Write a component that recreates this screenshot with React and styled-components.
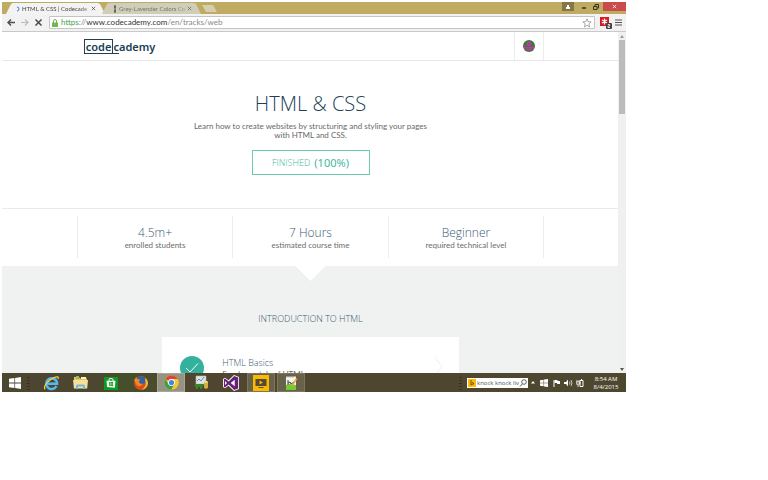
import React from "react";
import styled, { createGlobalStyle } from "styled-components";

const Global = createGlobalStyle`
  *, *::before, *::after { box-sizing: border-box; }
  body { margin: 0; background: #fff; font-family: "Open Sans", "Noto Sans", sans-serif; }
  h1, h2, h3, p { margin: 0; font-weight: 400; }
  button { border: 0; padding: 0; margin: 0; background: none; font: inherit; color: inherit; }
  svg { display: block; flex: none; }
`;

const Desktop = styled.div`
  display: flex;
  flex-direction: column;
  width: 81.25vw;
  height: 81.25vh;
  margin: 2px;
  overflow: hidden;
`;

/* Browser frame */
const TitleBar = styled.header`
  display: flex;
  flex: none;
  height: 12px;
  background: #bfab62;
`;
const TabStrip = styled.div`
  display: flex;
  flex: 1;
  align-items: flex-end;
  padding-left: 4px;
`;
const Tab = styled.div`
  display: flex;
  align-items: center;
  width: 99px;
  height: 11px;
  padding: 0 9px 0 11px;
  gap: 2px;
  margin-right: -3px;
  background: ${(p) => (p.$active ? "#f3f3f3" : "#d0cdb9")};
  color: ${(p) => (p.$active ? "#444" : "#77766c")};
  clip-path: polygon(0 100%, 5px 10%, 7px 0, calc(100% - 7px) 0, calc(100% - 5px) 10%, 100% 100%);
`;
const TabTitle = styled.span`
  flex: 1;
  white-space: nowrap;
  font-family: Lato, sans-serif;
  font-size: 6px;
  line-height: 10px;
  mask-image: linear-gradient(90deg, #000 85%, #0006);
`;
const NewTab = styled.button`
  width: 15px;
  height: 7px;
  margin: 0 0 2px 4px;
  background: #d5cfb0;
  clip-path: polygon(0 0, 11px 0, 100% 100%, 4px 100%);
`;
const WindowButtons = styled.div`
  display: flex;
  align-items: flex-start;
`;
const WindowButton = styled.button`
  display: grid;
  place-items: center;
  width: ${(p) => p.$w}px;
  height: 9px;
  background: ${(p) => p.$bg || "transparent"};
`;
const Spacer = styled.span`
  width: ${(p) => p.$w}px;
`;
const ToolBar = styled.nav`
  display: flex;
  flex: none;
  align-items: center;
  height: 18px;
  padding: 0 3px;
  background: #f2f2f2;
  border-bottom: 1px solid #c9c9c9;
`;
const ToolButton = styled.button`
  display: grid;
  place-items: center;
  width: ${(p) => p.$w || 14}px;
  height: 14px;
`;
const Omnibox = styled.form`
  display: flex;
  flex: 1;
  align-items: center;
  height: 13px;
  margin-left: 2px;
  padding: 0 2px;
  gap: 3px;
  background: #fff;
  border: 1px solid #c4c4c4;
  border-radius: 1px;
`;
const Address = styled.div`
  flex: 1;
  font-family: Lato, sans-serif;
  font-size: 8px;
  line-height: 11px;
  color: #888;
  white-space: nowrap;
  b { font-weight: 400; color: #333; }
  i { font-style: normal; color: #3ba346; }
`;

/* Page */
const Viewport = styled.div`
  display: flex;
  flex: 1;
  min-height: 0;
`;
const Page = styled.main`
  flex: 1;
  min-width: 0;
  overflow: hidden;
  background: #f0f2f1;
`;
const ScrollTrack = styled.div`
  display: flex;
  flex-direction: column;
  align-items: center;
  flex: none;
  width: 8px;
  background: #f0f0f0;
`;
const ScrollThumb = styled.div`
  width: 6px;
  height: 74px;
  margin-bottom: auto;
  background: #bcbcbc;
`;
const ScrollArrow = styled.button`
  display: grid;
  place-items: center;
  width: 8px;
  height: 8px;
`;
const SiteHeader = styled.header`
  display: flex;
  justify-content: center;
  height: 29px;
  padding-left: 1px;
  background: #fff;
  border-bottom: 1px solid #e6e8e8;
`;
const HeaderInner = styled.div`
  display: flex;
  justify-content: space-between;
  width: 76%;
  padding-left: 7px;
`;
const Logo = styled.a`
  display: flex;
  align-items: center;
  align-self: center;
  color: #204056;
  font-family: "Noto Sans", sans-serif;
  font-size: 11px;
  font-weight: 600;
  line-height: 13px;
  text-decoration: none;
`;
const LogoBox = styled.span`
  height: 15px;
  padding: 0 1px;
  border: 1px solid #204056;
`;
const LogoUnder = styled.span`
  border-bottom: 1px solid #204056;
  height: 15px;
  padding-top: 1px;
`;
const LogoRest = styled.span`
  height: 15px;
  padding-top: 1px;
`;
const AvatarCell = styled.button`
  display: grid;
  place-items: center;
  width: 30px;
  border: solid #eceeee;
  border-width: 0 1px;
`;
const Hero = styled.section`
  display: flex;
  flex-direction: column;
  align-items: center;
  height: 148px;
  padding: 29px 0 0 1px;
  background: #fff;
  border-bottom: 1px solid #e9ebeb;
  text-align: center;
`;
const Title = styled.h1`
  color: #204056;
  font-size: 20px;
  font-weight: 300;
  line-height: 28px;
`;
const Lead = styled.p`
  width: 240px;
  margin-top: 4px;
  color: #686868;
  font-family: Lato, sans-serif;
  font-size: 8px;
  line-height: 9px;
`;
const Finished = styled.button`
  display: flex;
  align-items: center;
  justify-content: center;
  gap: 4px;
  width: 118px;
  height: 25px;
  margin-top: 10px;
  border: 1px solid #6cc9b4;
  color: #45b79e;
  font-size: 9px;
  font-weight: 300;
  strong { font-family: "Noto Sans", sans-serif; font-size: 11px; font-weight: 400; }
`;
const Stats = styled.section`
  display: flex;
  justify-content: center;
  height: 57px;
  padding: 7px 0 8px 1px;
  background: #fff;
`;
const StatGrid = styled.div`
  display: grid;
  grid-template-columns: repeat(3, 1fr);
  width: 76%;
  border-right: 1px solid #eceeee;
`;
const Stat = styled.div`
  padding-top: 8px;
  border-left: 1px solid #eceeee;
  text-align: center;
`;
const StatValue = styled.h2`
  color: #3d5a74;
  font-size: 12px;
  font-weight: 300;
  line-height: 17px;
`;
const StatLabel = styled.p`
  color: #6c6c6c;
  font-family: Lato, sans-serif;
  font-size: 8px;
  line-height: 9px;
`;
const Course = styled.section`
  display: flex;
  flex-direction: column;
  align-items: center;
  padding-left: 1px;
`;
const Pointer = styled.div`
  width: 30px;
  height: 15px;
  background: #fff;
  clip-path: polygon(0 0, 100% 0, 50% 100%);
`;
const CourseTitle = styled.h2`
  margin: 31px 0 11px;
  color: #3d5a74;
  font-size: 9px;
  font-weight: 300;
  line-height: 14px;
`;
const Card = styled.article`
  display: flex;
  align-items: flex-start;
  width: 48.2%;
  min-height: 64px;
  padding: 19px 16px 0 18px;
  background: #fff;
`;
const CardText = styled.div`
  flex: 1;
  margin-left: 18px;
  color: #686868;
  font-family: Lato, sans-serif;
  font-size: 8px;
  line-height: 8px;
`;
const CardTitle = styled.h3`
  color: #3d5a74;
  font-family: "Open Sans", sans-serif;
  font-size: 9px;
  font-weight: 300;
  line-height: 14px;
`;

/* Task bar */
const TaskBar = styled.footer`
  display: flex;
  align-items: center;
  flex: none;
  height: 19px;
  background: linear-gradient(90deg, #4c4530, #4d4730 15%, #44502a 21%, #504630 28%, #4e472f);
  color: #fff;
`;
const TaskItem = styled.button`
  display: grid;
  place-items: center;
  width: ${(p) => p.$w || 28}px;
  height: 19px;
  margin: 0 1px;
  background: ${(p) => (p.$active ? "#979383" : p.$open ? "#686249" : "transparent")};
  border: solid ${(p) => (p.$active ? "#aaa697" : p.$open ? "#7c765d" : "transparent")};
  border-width: 1px;
`;
const Grip = styled.span`
  width: 3px;
  height: 15px;
  background: repeating-linear-gradient(0deg, #37331f 0 1px, transparent 1px 3px);
`;
const Tray = styled.div`
  display: flex;
  align-items: center;
  margin-left: auto;
`;
const SearchBox = styled.label`
  display: flex;
  align-items: center;
  width: 61px;
  height: 10px;
  margin: 0 1px 0 5px;
  padding: 1px;
  background: #fff;
`;
const SearchInput = styled.input`
  flex: 1;
  min-width: 0;
  height: 8px;
  padding: 0 0 0 1px;
  border: 0;
  outline: 0;
  background: none;
  color: #555;
  font: 6px/8px "Open Sans", sans-serif;
`;
const TrayButton = styled.button`
  display: grid;
  place-items: center;
  width: ${(p) => p.$w || 12}px;
  height: 14px;
`;
const Clock = styled.time`
  width: 40px;
  font-size: 6px;
  line-height: 8px;
  text-align: center;
`;

const Svg = ({ w, h = w, box, children }) => (
  <svg width={w} height={h} viewBox={box || `0 0 ${w} ${h}`} fill="none" aria-hidden="true">{children}</svg>
);
const Cross = ({ size = 5, color = "#555", width = 1 }) => (
  <Svg w={size} box="0 0 6 6"><path d="M1 1l4 4M5 1L1 5" stroke={color} strokeWidth={width} /></Svg>
);
const WinLogo = ({ size }) => (
  <Svg w={size} box="0 0 12 12"><path d="M0 1.7L5.4 1v4.6H0zM6.1.9L12 0v5.6H6.1zM0 6.4h5.4V11L0 10.3zM6.1 6.4H12V12l-5.9-.9z" fill="#fff" /></Svg>
);

const apps = [
  { name: "Internet Explorer", icon: (
    <Svg w={17} h={16}>
      <path d="M13.5 11.2A5.4 5.4 0 1 1 14 7.5v1.2H5.2" stroke="#54b9ee" strokeWidth="2.5" />
      <path d="M3.5 8.7h10" stroke="#54b9ee" strokeWidth="1.8" />
      <path d="M2.2 14.2C-.8 12 6 4.3 11.6 2.3c2.8-1 4.3-.6 3.4 1.6" stroke="#f1cc4c" strokeWidth="1.3" />
    </Svg>) },
  { name: "File Explorer", icon: (
    <Svg w={16} h={15}>
      <path d="M1 2h5l1 1.5h7V13H1z" fill="#e6c46b" />
      <path d="M3 1h3v3H3z" fill="#8dbd65" /><path d="M8 2h5v2H8z" fill="#fff1b9" />
      <path d="M0 5h15l-.8 8.5H1z" fill="#f6df97" />
      <path d="M3 14v-3q0-1.5 1.5-1.5h6Q12 9.5 12 11v3h-2v-2.5H5V14z" fill="#73b9df" />
    </Svg>) },
  { name: "Store", icon: (
    <Svg w={14}>
      <path d="M0 1h14v13H0z" fill="#0c9b22" />
      <path d="M5 5V3.6q0-1 1-1h2q1 0 1 1V5" stroke="#fff" />
      <path d="M2.5 4.7h9l-.6 7-7.8-.6z" fill="#fff" />
      <path d="M5 6.3l1.700-.2v1.700H5zM7.100 6l2-.2v2h-2zM5 8.300h1.700V10L5 9.800zM7.100 8.300h2v2l-2-.2z" fill="#0c9b22" />
    </Svg>) },
  { name: "Firefox", icon: (
    <Svg w={16}>
      <circle cx="8" cy="8" r="7" fill="#db4b1e" />
      <path d="M3.5 3Q8-.5 12.5 3.2L13 8 8 9 3 6z" fill="#2b64a8" />
      <path d="M1.2 5Q2 3 3.5 2l.7 2 3 .6-1.4 1.7 1 2.2 3 .5-2.3 2Q4.3 12 3 9z" fill="#f08a20" />
      <path d="M12 3q3 2 3 5.5Q14 14 8.5 15q4-3 4.2-6z" fill="#f7b733" />
    </Svg>) },
  { name: "Chrome", active: true, icon: (
    <Svg w={15} box="0 0 16 16">
      <circle cx="8" cy="8" r="7.5" fill="#f4c930" />
      <path d="M8 8L1.5 4.250A7.5 7.5 0 0 1 14.5 4.25H8z" fill="#dc4434" />
      <path d="M1.5 4.25A7.5 7.5 0 0 0 8 15.5l3.3-5.7L8 8 4.7 9.8z" fill="#3b9e4b" />
      <path d="M8 4.25h6.5A7.5 7.5 0 0 1 8 15.5l3.3-5.7z" fill="#f4c930" />
      <circle cx="8" cy="8" r="3.7" fill="#fff" /><circle cx="8" cy="8" r="2.8" fill="#4388da" />
    </Svg>) },
  { name: "Server monitor", icon: (
    <Svg w={15}>
      <path d="M2 1h10v8H2z" fill="#dfe5e4" stroke="#aeb8b5" strokeWidth=".6" />
      <path d="M3 6l2-2 2 2 3-4" stroke="#6e8eb0" />
      <path d="M1 9h8v3H1zM2 12h2v2H2zM6 12h2v2H6z" fill="#35872d" />
      <path d="M10 7q2-1.5 4 0v6q-2 1.5-4 0z" fill="#d4b13b" /><ellipse cx="12" cy="7" rx="2" ry="1" fill="#f2dc82" />
    </Svg>) },
  { name: "Visual Studio", icon: (
    <Svg w={16}>
      <path d="M11 0l5 2v12l-5 2-5.5-5.3L2 13.3l-2-1.2V3.900l2-1.200 3.500 2.600z" fill="#fff" />
      <path fillRule="evenodd" d="M11.2 1l4 1.6v10.8l-4 1.6-5.5-5.4L2 12.4l-1.100-.6V4.200L2 3.600l3.700 2.800zM11.700 4.700L7.700 8l4 3.300zM2 6v4l2-2z" fill="#68217a" />
    </Svg>) },
  { name: "Media player", open: true, icon: (
    <Svg w={16}>
      <path d="M0 0h16v16H0z" fill="#fdb900" /><path d="M2.5 4h11v7h-11zM5.5 12h5v1h-5z" fill="#554a35" />
      <path d="M6.5 5.5L10 7.5l-3.5 2z" fill="#fdb900" />
    </Svg>) },
  { name: "Notepad++", open: true, icon: (
    <Svg w={15} h={16}>
      <path d="M2 1.5h10V15H2z" fill="#f5f7ef" /><path d="M2 10l4-1 6 1v5H2z" fill="#78c833" />
      <path d="M3 1v1.5M5 1v1.5M7 1v1.5M9 1v1.5" stroke="#777" strokeWidth=".7" />
      <path d="M4 5v5M4 8l2-1 1 2 3-2" stroke="#334431" />
      <path d="M8 11l5-8" stroke="#e2a936" strokeWidth="1.5" /><path d="M12.5 3.5l1.3-2" stroke="#bd3c2d" strokeWidth="1.8" />
    </Svg>) },
];

const stats = [
  ["4.5m+", "enrolled students"],
  ["7 Hours", "estimated course time"],
  ["Beginner", "required technical level"],
];

export default function App() {
  return (
    <>
      <Global />
      <Desktop>
        <TitleBar>
          <TabStrip>
            <Tab $active>
              <Svg w={3} h={6}><path d="M0 1q2 0 2 2T0 5" stroke="#4778df" /></Svg>
              <TabTitle>HTML &amp; CSS | Codecade</TabTitle>
              <button aria-label="Close tab"><Cross /></button>
            </Tab>
            <Tab>
              <Svg w={4} h={8}><path d="M2 0v8M1 2h2M1 6h2" stroke="#444" /></Svg>
              <TabTitle>Grey-Lavender Colors Co</TabTitle>
              <button aria-label="Close tab"><Cross color="#737064" /></button>
            </Tab>
            <NewTab aria-label="New tab" />
          </TabStrip>
          <WindowButtons>
            <WindowButton $w={12} $bg="#85774a" aria-label="User">
              <Svg w={6}><path d="M2 1h2v2h1v2H1V3h1z" fill="#fff" /></Svg>
            </WindowButton>
            <Spacer $w={4} />
            <WindowButton $w={12} aria-label="Minimize"><Svg w={4} h={5}><path d="M0 4h4" stroke="#373323" strokeWidth="1.5" /></Svg></WindowButton>
            <WindowButton $w={12} aria-label="Restore">
              <Svg w={6}><path d="M2 2V.5h3.5V4H4M.5 2.5H4v3H.5z" stroke="#373323" /></Svg>
            </WindowButton>
            <Spacer $w={1} />
            <WindowButton $w={23} $bg="#cb4a4c" aria-label="Close"><Cross color="#fff" /></WindowButton>
          </WindowButtons>
        </TitleBar>
        <ToolBar>
          <ToolButton $w={11} aria-label="Back"><Svg w={8} h={7}><path d="M8 3.5H1M4 .5l-3 3 3 3" stroke="#505050" strokeWidth="1.5" /></Svg></ToolButton>
          <Spacer $w={3} />
          <ToolButton $w={11} aria-label="Forward"><Svg w={8} h={7}><path d="M0 3.5h7M4 .5l3 3-3 3" stroke="#bbb" strokeWidth="1.2" /></Svg></ToolButton>
          <Spacer $w={3} />
          <ToolButton $w={11} aria-label="Stop"><Cross size={9} color="#484848" /></ToolButton>
          <Spacer $w={3} />
          <Omnibox>
            <Svg w={6} h={8}><path d="M1.5 4V2q0-1.500 1.500-1.500T4.500 2v2" stroke="#79a96b" /><path d="M0 3.500h6V8H0z" fill="#6dbb4e" /></Svg>
            <Address><i>https</i>://<b>www.codecademy.com</b>/en/tracks/web</Address>
            <button type="button" aria-label="Bookmark"><Svg w={10} box="0 0 12 12"><path d="M6 1l1.400 3.400 3.600.3-2.800 2.400.9 3.600L6 8.800l-3.100 1.900.9-3.600L1 4.700l3.600-.3z" stroke="#8c8c8c" strokeWidth=".9" /></Svg></button>
          </Omnibox>
          <Spacer $w={3} />
          <ToolButton $w={14} aria-label="Extension">
            <Svg w={13} h={13}>
              <path d="M1 1h9v9H1z" fill="#d71920" /><path d="M5.500 2.500v6M3 4l5 3M8 4L3 7" stroke="#fff" strokeWidth="1.300" />
              <rect x="7" y="7" width="6" height="6" rx="1" fill="#444" /><path d="M8.800 8.500h1.900V10H9v1.500h2" stroke="#fff" strokeWidth=".8" />
            </Svg>
          </ToolButton>
          <Spacer $w={2} />
          <ToolButton $w={9} aria-label="Menu"><Svg w={7} h={7}><path d="M0 1h7M0 3.500h7M0 6h7" stroke="#555" strokeWidth="1.200" /></Svg></ToolButton>
        </ToolBar>
        <Viewport>
          <Page>
            <SiteHeader>
              <HeaderInner>
                <Logo href="#" aria-label="codecademy">
                  <LogoBox>code</LogoBox><LogoUnder>c</LogoUnder><LogoRest>ademy</LogoRest>
                </Logo>
                <AvatarCell aria-label="Profile">
                  <Svg w={12}>
                    <circle cx="6" cy="6" r="6" fill="#338023" />
                    <path d="M6 1l2.500 2v2L6 6.500 3.500 5V3z" fill="#c532bd" />
                    <path d="M1 6.500l3 1h4l3-1-1 2.500H2zM4 10h4" stroke="#c532bd" strokeWidth="1.200" />
                    <path d="M5 4h2" stroke="#338023" strokeWidth=".8" />
                  </Svg>
                </AvatarCell>
              </HeaderInner>
            </SiteHeader>
            <Hero>
              <Title>HTML &amp; CSS</Title>
              <Lead>Learn how to create websites by structuring and styling your pages with HTML and CSS.</Lead>
              <Finished>FINISHED <strong>(100%)</strong></Finished>
            </Hero>
            <Stats>
              <StatGrid>
                {stats.map(([value, label]) => (
                  <Stat key={label}><StatValue>{value}</StatValue><StatLabel>{label}</StatLabel></Stat>
                ))}
              </StatGrid>
            </Stats>
            <Course>
              <Pointer />
              <CourseTitle>INTRODUCTION TO HTML</CourseTitle>
              <Card>
                <Svg w={24}><circle cx="12" cy="12" r="12" fill="#32b29d" /><path d="M6 12l4 4 8-8.500" stroke="#fff" /></Svg>
                <CardText>
                  <CardTitle>HTML Basics</CardTitle>
                  <p>Fundamentals of HTML</p>
                </CardText>
                <Svg w={9} h={20}><path d="M1 1l7 10-7 8" stroke="#eeefef" /></Svg>
              </Card>
            </Course>
          </Page>
          <ScrollTrack>
            <ScrollArrow aria-label="Scroll up"><Svg w={4} h={3}><path d="M0 3l2-3 2 3z" fill="#999" /></Svg></ScrollArrow>
            <ScrollThumb />
            <ScrollArrow aria-label="Scroll down"><Svg w={4} h={3}><path d="M0 0l2 3 2-3z" fill="#555" /></Svg></ScrollArrow>
          </ScrollTrack>
        </Viewport>
        <TaskBar>
          <TaskItem $w={23} aria-label="Start"><WinLogo size={12} /></TaskItem>
          <Grip />
          <Spacer $w={6} />
          {apps.map((a) => (
            <TaskItem key={a.name} aria-label={a.name} $active={a.active} $open={a.open}>{a.icon}</TaskItem>
          ))}
          <Tray>
            <Grip />
            <SearchBox>
              <Svg w={8}><path d="M0 0h8v8H0z" fill="#ffb900" /><path d="M3 1v5l3-1.500L4 3.500" stroke="#6b5015" /></Svg>
              <SearchInput aria-label="Search" defaultValue="knock knock live" />
              <Svg w={8}><circle cx="5" cy="3" r="2.300" stroke="#555" strokeWidth=".9" /><path d="M3.500 4.700L1 7.500" stroke="#555" /></Svg>
            </SearchBox>
            <TrayButton $w={8} aria-label="Show hidden icons"><Svg w={4} h={3}><path d="M0 2.500L2 0l2 2.500z" fill="#fff" /></Svg></TrayButton>
            <Spacer $w={1} />
            <TrayButton aria-label="Windows update"><WinLogo size={8} /></TrayButton>
            <TrayButton aria-label="Action center"><Svg w={7} h={8}><path d="M1 1v7" stroke="#fff" /><path d="M1.500 1h3v1H7v3H4V4H1.500z" fill="#fff" /></Svg></TrayButton>
            <TrayButton aria-label="Volume"><Svg w={9} h={8}><path d="M0 3h2l2-2.500v7L2 5H0z" fill="#fff" /><path d="M5.500 2.500q1 1.500 0 3M7 1q2 3 0 6" stroke="#fff" strokeWidth=".7" /></Svg></TrayButton>
            <TrayButton aria-label="Power"><Svg w={8}><path d="M4 1.500h3v6H4zM5 .5h1" stroke="#fff" /><path d="M1 1v2M3 1v2M0 3h4v2H0zM2 5v3" stroke="#fff" strokeWidth=".8" /></Svg></TrayButton>
            <Clock dateTime="2015-08-04T08:54">8:54 AM<br />8/4/2015</Clock>
          </Tray>
        </TaskBar>
      </Desktop>
    </>
  );
}
